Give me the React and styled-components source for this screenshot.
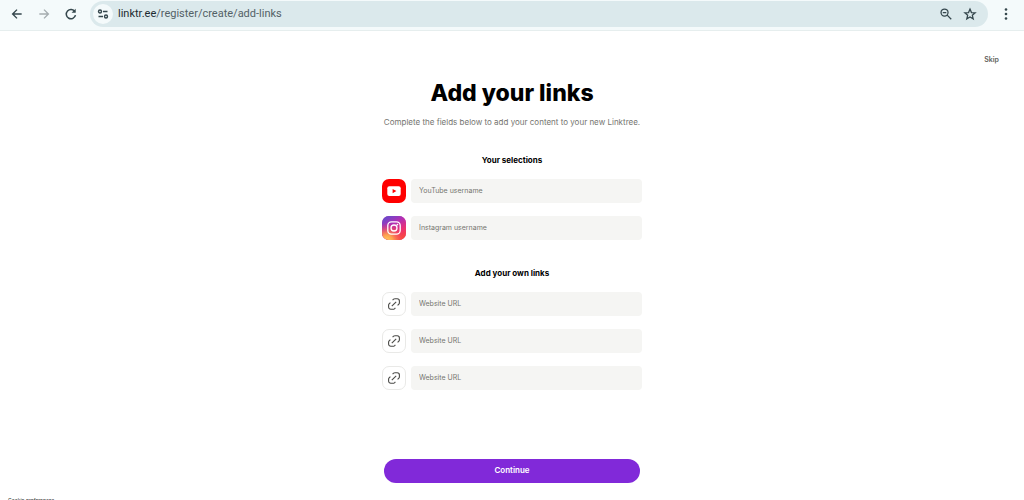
import React from 'react';
import styled, { createGlobalStyle } from 'styled-components';

const GlobalStyle = createGlobalStyle`
  :root {
    --toolbar: #f4fafb;
    --omnibox: #dbe9ec;
    --field: #f5f5f3;
    --muted: #757570;
    --purple: #8129d9;
  }

  * {
    box-sizing: border-box;
  }

  html {
    scrollbar-width: none;
  }

  body {
    margin: 0;
    background: #fff;
    color: #000;
    font-family: Inter, 'Liberation Sans', sans-serif;
  }
`;

const Toolbar = styled.header`
  display: flex;
  align-items: center;
  height: 31px;
  padding: 1px 0 3px 8px;
  background: var(--toolbar);
  border-bottom: 1px solid #e6eeee;
`;

const ToolButton = styled.button`
  display: flex;
  align-items: center;
  justify-content: center;
  flex: none;
  width: ${props => props.$width || 27}px;
  height: 24px;
  padding: 0;
  border: none;
  background: none;
  color: ${props => (props.$faded ? '#a5adb0' : '#35474d')};
  cursor: pointer;
`;

const NavButtons = styled.nav`
  display: flex;
  width: 82px;
  margin-left: -5px;
  margin-right: 5px;
`;

const Omnibox = styled.div`
  display: flex;
  align-items: center;
  flex: 1;
  height: 26px;
  padding: 0 6px 0 3px;
  border-radius: 13px;
  background: var(--omnibox);
`;

const SiteInfo = styled(ToolButton)`
  width: 20px;
  height: 20px;
  border-radius: 50%;
  background: var(--toolbar);
`;

const Address = styled.div`
  flex: 1;
  margin-left: 5px;
  font-family: Roboto, sans-serif;
  font-size: 11px;
  line-height: 14px;
  color: #536166;

  b {
    font-weight: 400;
    color: #1d2b30;
  }
`;

const Page = styled.div`
  display: flex;
  flex-direction: column;
`;

const SkipRow = styled.div`
  display: flex;
  justify-content: flex-end;
  padding: 24px 25px 0;
`;

const SkipLink = styled.a`
  color: #5f5f5b;
  font-size: 7px;
  font-weight: 600;
  line-height: 10px;
  text-decoration: none;
`;

const Main = styled.main`
  display: flex;
  flex-direction: column;
  width: 100%;
  max-width: 260px;
  margin: 0 auto;
  text-align: center;
`;

const Title = styled.h1`
  margin: 12px 0 0;
  font-size: 23px;
  font-weight: 800;
  line-height: 32px;
  white-space: nowrap;
`;

const Subtitle = styled.p`
  margin: 8px 0 0;
  color: var(--muted);
  font-size: 8px;
  line-height: 10px;
  white-space: nowrap;
`;

const Section = styled.section`
  display: flex;
  flex-direction: column;
  gap: 13px;
  margin-top: 28px;
`;

const SectionTitle = styled.h2`
  margin: 0;
  font-size: 8px;
  font-weight: 700;
  line-height: 11px;
`;

const Field = styled.label`
  display: flex;
  gap: 5px;
`;

const Tile = styled.span`
  display: flex;
  align-items: center;
  justify-content: center;
  flex: none;
  width: 24px;
  height: 24px;
  border-radius: 7px;
  overflow: hidden;
  background: ${props => props.$background || '#fff'};
  border: ${props => (props.$outlined ? '1px solid #e9e9e7' : 'none')};
`;

const TextInput = styled.input`
  flex: 1;
  min-width: 0;
  height: 24px;
  padding: 0 8px 1px;
  border: none;
  border-radius: 4px;
  background: var(--field);
  font-family: inherit;
  font-size: 7px;

  &::placeholder {
    color: var(--muted);
    opacity: 1;
  }
`;

const ContinueButton = styled.button`
  height: 24px;
  margin: 69px 2px 0;
  padding: 0 0 2px;
  border: none;
  border-radius: 12px;
  background: var(--purple);
  color: #fff;
  font-family: inherit;
  font-size: 8px;
  font-weight: 600;
  cursor: pointer;
`;

const Footer = styled.footer`
  padding: 13px 8px 8px;
  font-size: 5px;
  line-height: 8px;

  a {
    color: #333;
  }
`;

const Stroked = ({ size, width = 2, children }) => (
  <svg
    width={size}
    height={size}
    viewBox="0 0 24 24"
    fill="none"
    stroke="currentColor"
    strokeWidth={width}
    aria-hidden="true"
  >
    {children}
  </svg>
);

const BackIcon = () => (
  <Stroked size={14} width={2.4}>
    <path d="M20 12H5M12 4.5L4.5 12l7.5 7.5" />
  </Stroked>
);

const ForwardIcon = () => (
  <Stroked size={14} width={2.4}>
    <path d="M4 12h15M12 4.5l7.5 7.5-7.5 7.5" />
  </Stroked>
);

const ReloadIcon = () => (
  <Stroked size={14} width={2.6}>
    <path d="M18.7 8A8 8 0 1 0 19.7 14" />
    <path d="M20 3v7h-7z" fill="currentColor" stroke="none" />
  </Stroked>
);

const TuneIcon = () => (
  <Stroked size={12} width={2.8}>
    <circle cx="6" cy="7" r="3" />
    <path d="M12 7h9M3 17h9" />
    <circle cx="18" cy="17" r="3" />
  </Stroked>
);

const ZoomOutIcon = () => (
  <Stroked size={14} width={2.2}>
    <circle cx="9.5" cy="9.5" r="6" />
    <path d="M14 14l7 7M6.5 9.5h6" />
  </Stroked>
);

const StarIcon = () => (
  <Stroked size={14} width={2.2}>
    <path d="M12 3.6l2.5 5.9 6.4.5-4.9 4.2 1.5 6.2-5.5-3.3-5.5 3.3L8 14.2 3.1 10l6.4-.5z" />
  </Stroked>
);

const MenuIcon = () => (
  <svg width="14" height="14" viewBox="0 0 14 14" fill="currentColor" aria-hidden="true">
    <circle cx="7" cy="2.5" r="1.3" />
    <circle cx="7" cy="7" r="1.3" />
    <circle cx="7" cy="11.5" r="1.3" />
  </svg>
);

const YouTubeIcon = () => (
  <svg width="24" height="24" viewBox="0 0 24 24" aria-hidden="true">
    <rect x="5.3" y="7.3" width="13.4" height="9.6" rx="2" fill="#fff" />
    <path d="M10.6 9.9v4.3l3.8-2.15z" fill="#f00" />
  </svg>
);

const InstagramIcon = () => (
  <svg width="24" height="24" viewBox="0 0 24 24" aria-hidden="true">
    <defs>
      <linearGradient id="ig-base" x1="0.1" y1="0" x2="0.7" y2="1">
        <stop offset="0" stopColor="#5b4fd0" />
        <stop offset="0.4" stopColor="#b32fb4" />
        <stop offset="0.75" stopColor="#ee3170" />
        <stop offset="1" stopColor="#f9483f" />
      </linearGradient>
      <radialGradient id="ig-glow" cx="0.2" cy="1.05" r="0.75">
        <stop offset="0" stopColor="#ffd45c" />
        <stop offset="0.35" stopColor="#fda04f" />
        <stop offset="1" stopColor="#f5404f" stopOpacity="0" />
      </radialGradient>
    </defs>
    <rect width="24" height="24" fill="url(#ig-base)" />
    <rect width="24" height="24" fill="url(#ig-glow)" />
    <g fill="none" stroke="#fff" strokeWidth="1.3">
      <rect x="5.8" y="5.8" width="12.4" height="12.4" rx="3.6" />
      <circle cx="12" cy="12" r="3" />
    </g>
    <circle cx="15.4" cy="8.6" r="0.9" fill="#fff" />
  </svg>
);

const LinkIcon = () => (
  <svg
    width="14"
    height="14"
    viewBox="0 0 14 14"
    fill="none"
    stroke="#4a4a47"
    strokeWidth="1.1"
    aria-hidden="true"
  >
    <path d="M5.6 3.2l1-1q.6-.5 1.4-.5h2.2a2.2 2.2 0 0 1 2.2 2.2v1.9q0 .8-.5 1.3l-1.3 1.3" />
    <path d="M8.4 10.8l-1 1q-.6.5-1.4.5H3.8a2.2 2.2 0 0 1-2.2-2.2V8.200q0-.8.5-1.3l1.3-1.3" />
    <path d="M4.800 9.200l4.400-4.400" />
  </svg>
);

const selections = [
  { name: 'youtube', placeholder: 'YouTube username', background: '#f00', Icon: YouTubeIcon },
  { name: 'instagram', placeholder: 'Instagram username', background: '#c6309c', Icon: InstagramIcon },
];

const ownLinks = ['website-1', 'website-2', 'website-3'];

const App = () => {
  return (
    <>
      <GlobalStyle />
      <Toolbar>
        <NavButtons>
          <ToolButton aria-label="Back"><BackIcon /></ToolButton>
          <ToolButton aria-label="Forward" $faded><ForwardIcon /></ToolButton>
          <ToolButton aria-label="Reload"><ReloadIcon /></ToolButton>
        </NavButtons>
        <Omnibox>
          <SiteInfo aria-label="Site information"><TuneIcon /></SiteInfo>
          <Address><b>linktr.ee</b>/register/create/add-links</Address>
          <ToolButton aria-label="Zoom" $width={24}><ZoomOutIcon /></ToolButton>
          <ToolButton aria-label="Bookmark" $width={24}><StarIcon /></ToolButton>
        </Omnibox>
        <ToolButton aria-label="Menu" $width={36}><MenuIcon /></ToolButton>
      </Toolbar>
      <Page>
        <SkipRow>
          <SkipLink href="#skip">Skip</SkipLink>
        </SkipRow>
        <Main>
          <Title>Add your links</Title>
          <Subtitle>Complete the fields below to add your content to your new Linktree.</Subtitle>
          <Section>
            <SectionTitle>Your selections</SectionTitle>
            {selections.map(({ name, placeholder, background, Icon }) => (
              <Field key={name}>
                <Tile $background={background}><Icon /></Tile>
                <TextInput name={name} placeholder={placeholder} aria-label={placeholder} />
              </Field>
            ))}
          </Section>
          <Section>
            <SectionTitle>Add your own links</SectionTitle>
            {ownLinks.map(name => (
              <Field key={name}>
                <Tile $outlined><LinkIcon /></Tile>
                <TextInput name={name} placeholder="Website URL" aria-label="Website URL" />
              </Field>
            ))}
          </Section>
          <ContinueButton>Continue</ContinueButton>
        </Main>
        <Footer>
          <a href="#cookies">Cookie preferences</a>
        </Footer>
      </Page>
    </>
  );
};

export default App;
